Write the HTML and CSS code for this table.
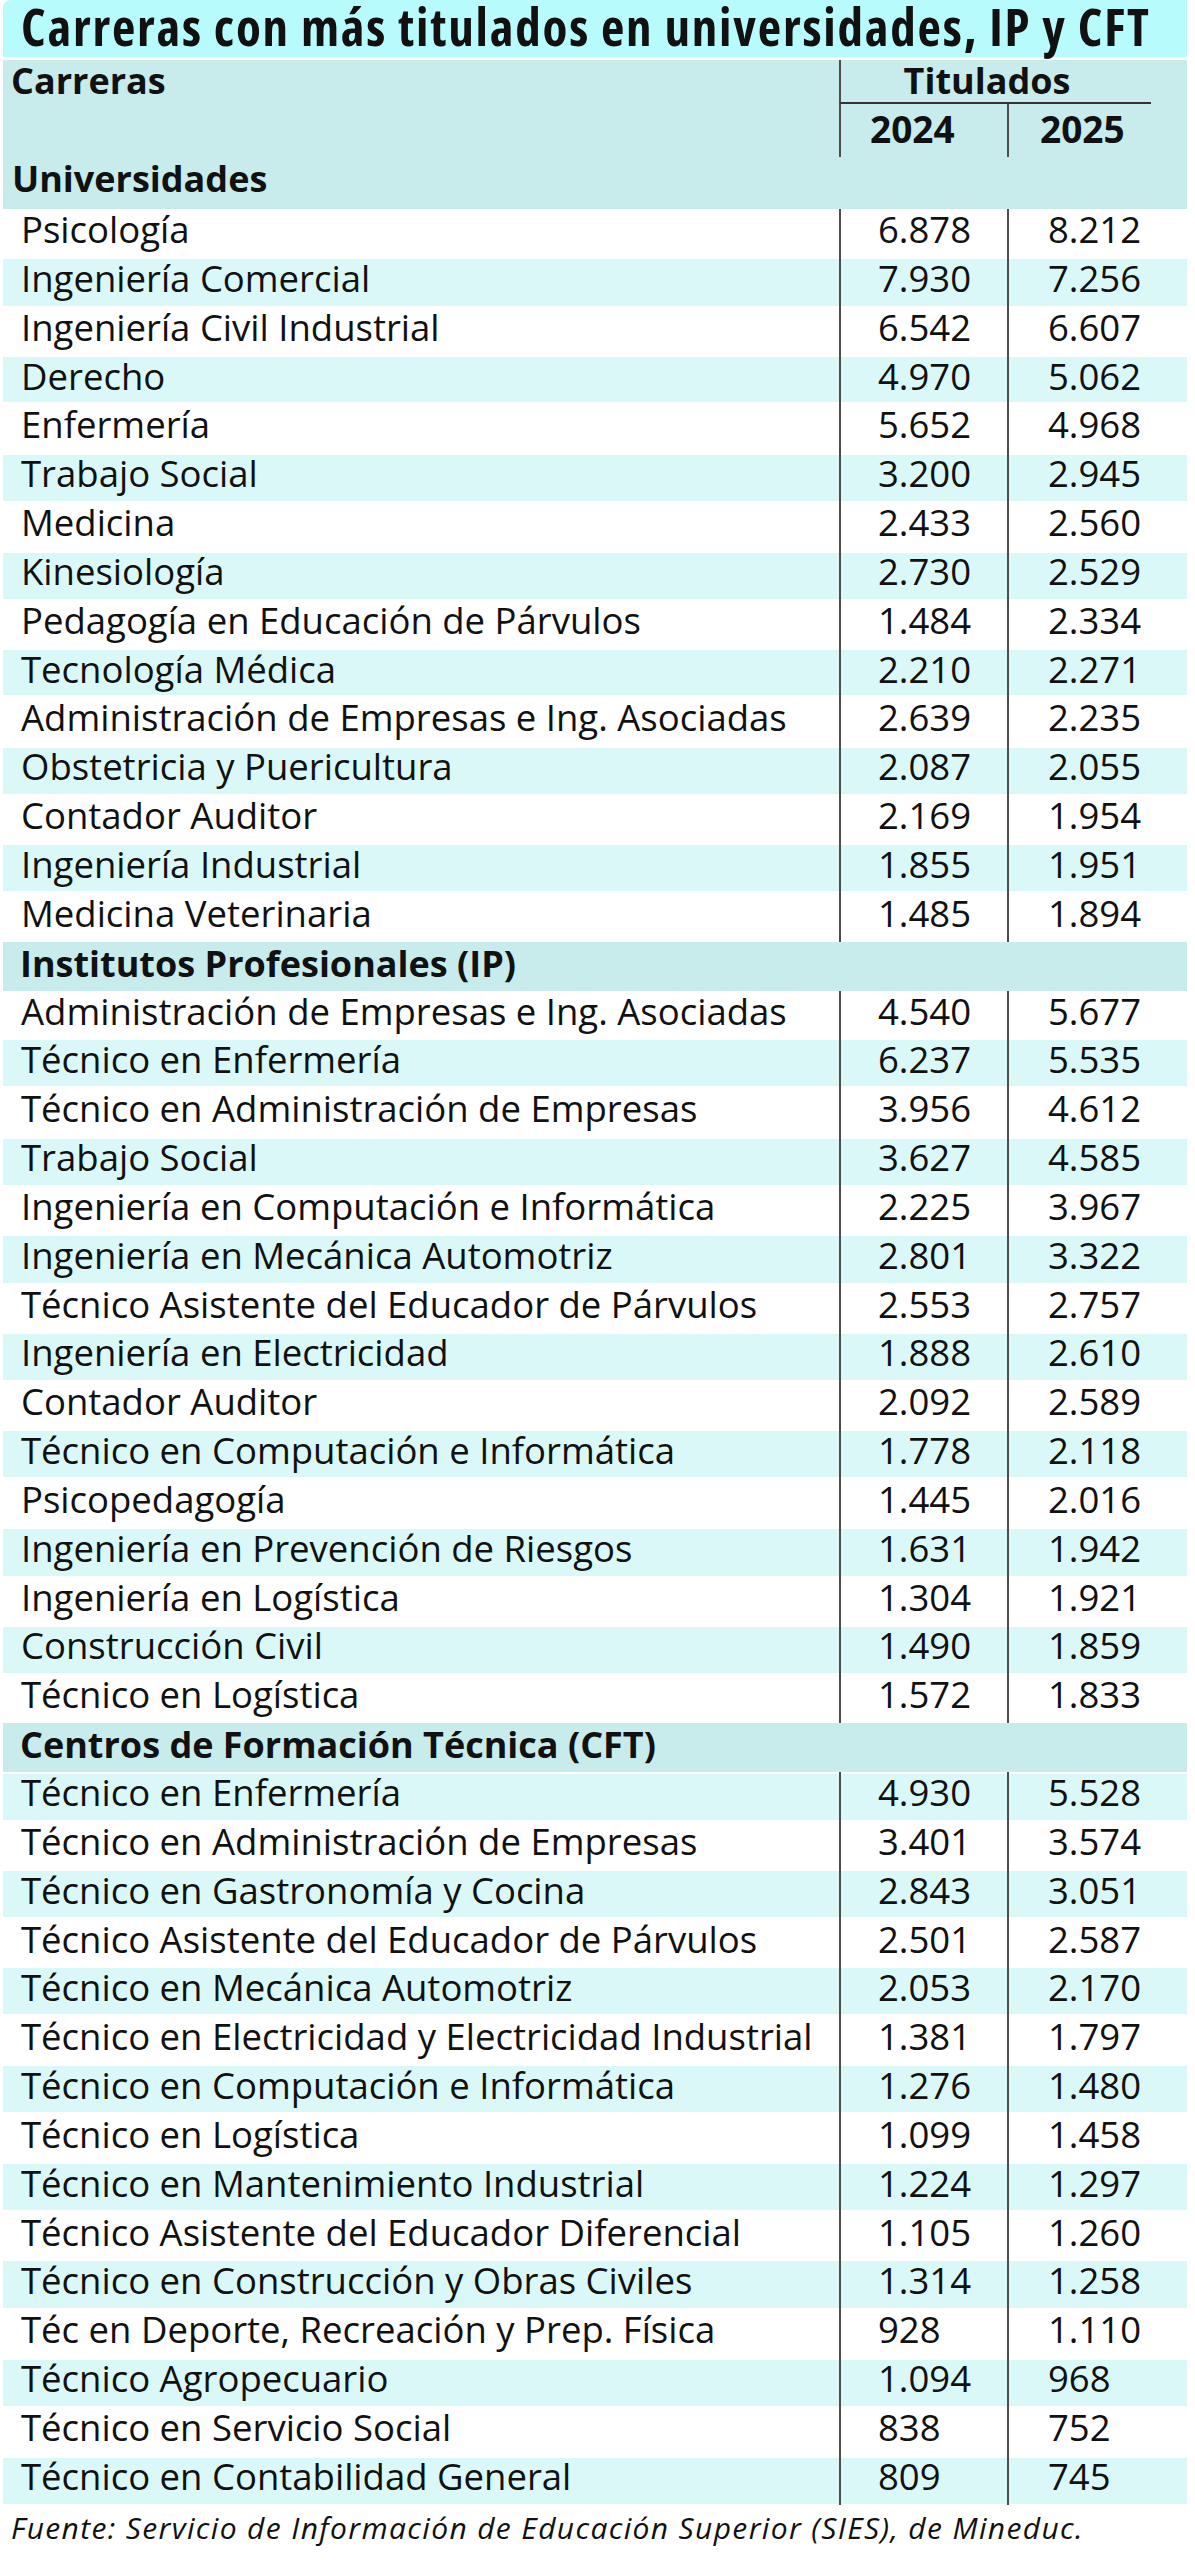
FILE: index.html
```html
<!DOCTYPE html>
<html lang="es">
<head>
<meta charset="utf-8">
<title>Carreras con más titulados</title>
<link rel="stylesheet" href="styles.css">
</head>
<body>
<div class="sheet">
  <div class="title">Carreras con más titulados en universidades, IP y CFT</div>
  <div class="head">
    <div class="carreras">Carreras</div>
    <div class="tit"><span>Titulados</span></div>
    <div class="yr y1">2024</div>
    <div class="yr y2">2025</div>
  </div>
  <div class="sec first">Universidades</div>
  <div class="row"><div class="name">Psicología</div><div class="num">6.878</div><div class="num n2">8.212</div></div>
  <div class="row alt"><div class="name">Ingeniería Comercial</div><div class="num">7.930</div><div class="num n2">7.256</div></div>
  <div class="row"><div class="name">Ingeniería Civil Industrial</div><div class="num">6.542</div><div class="num n2">6.607</div></div>
  <div class="row alt"><div class="name">Derecho</div><div class="num">4.970</div><div class="num n2">5.062</div></div>
  <div class="row"><div class="name">Enfermería</div><div class="num">5.652</div><div class="num n2">4.968</div></div>
  <div class="row alt"><div class="name">Trabajo Social</div><div class="num">3.200</div><div class="num n2">2.945</div></div>
  <div class="row"><div class="name">Medicina</div><div class="num">2.433</div><div class="num n2">2.560</div></div>
  <div class="row alt"><div class="name">Kinesiología</div><div class="num">2.730</div><div class="num n2">2.529</div></div>
  <div class="row"><div class="name">Pedagogía en Educación de Párvulos</div><div class="num">1.484</div><div class="num n2">2.334</div></div>
  <div class="row alt"><div class="name">Tecnología Médica</div><div class="num">2.210</div><div class="num n2">2.271</div></div>
  <div class="row"><div class="name">Administración de Empresas e Ing. Asociadas</div><div class="num">2.639</div><div class="num n2">2.235</div></div>
  <div class="row alt"><div class="name">Obstetricia y Puericultura</div><div class="num">2.087</div><div class="num n2">2.055</div></div>
  <div class="row"><div class="name">Contador Auditor</div><div class="num">2.169</div><div class="num n2">1.954</div></div>
  <div class="row alt"><div class="name">Ingeniería Industrial</div><div class="num">1.855</div><div class="num n2">1.951</div></div>
  <div class="row"><div class="name">Medicina Veterinaria</div><div class="num">1.485</div><div class="num n2">1.894</div></div>

  <div class="sec">Institutos Profesionales (IP)</div>
  <div class="row"><div class="name">Administración de Empresas e Ing. Asociadas</div><div class="num">4.540</div><div class="num n2">5.677</div></div>
  <div class="row alt"><div class="name">Técnico en Enfermería</div><div class="num">6.237</div><div class="num n2">5.535</div></div>
  <div class="row"><div class="name">Técnico en Administración de Empresas</div><div class="num">3.956</div><div class="num n2">4.612</div></div>
  <div class="row alt"><div class="name">Trabajo Social</div><div class="num">3.627</div><div class="num n2">4.585</div></div>
  <div class="row"><div class="name">Ingeniería en Computación e Informática</div><div class="num">2.225</div><div class="num n2">3.967</div></div>
  <div class="row alt"><div class="name">Ingeniería en Mecánica Automotriz</div><div class="num">2.801</div><div class="num n2">3.322</div></div>
  <div class="row"><div class="name">Técnico Asistente del Educador de Párvulos</div><div class="num">2.553</div><div class="num n2">2.757</div></div>
  <div class="row alt"><div class="name">Ingeniería en Electricidad</div><div class="num">1.888</div><div class="num n2">2.610</div></div>
  <div class="row"><div class="name">Contador Auditor</div><div class="num">2.092</div><div class="num n2">2.589</div></div>
  <div class="row alt"><div class="name">Técnico en Computación e Informática</div><div class="num">1.778</div><div class="num n2">2.118</div></div>
  <div class="row"><div class="name">Psicopedagogía</div><div class="num">1.445</div><div class="num n2">2.016</div></div>
  <div class="row alt"><div class="name">Ingeniería en Prevención de Riesgos</div><div class="num">1.631</div><div class="num n2">1.942</div></div>
  <div class="row"><div class="name">Ingeniería en Logística</div><div class="num">1.304</div><div class="num n2">1.921</div></div>
  <div class="row alt"><div class="name">Construcción Civil</div><div class="num">1.490</div><div class="num n2">1.859</div></div>
  <div class="row"><div class="name">Técnico en Logística</div><div class="num">1.572</div><div class="num n2">1.833</div></div>

  <div class="sec">Centros de Formación Técnica (CFT)</div>
  <div class="row alt"><div class="name">Técnico en Enfermería</div><div class="num">4.930</div><div class="num n2">5.528</div></div>
  <div class="row"><div class="name">Técnico en Administración de Empresas</div><div class="num">3.401</div><div class="num n2">3.574</div></div>
  <div class="row alt"><div class="name">Técnico en Gastronomía y Cocina</div><div class="num">2.843</div><div class="num n2">3.051</div></div>
  <div class="row"><div class="name">Técnico Asistente del Educador de Párvulos</div><div class="num">2.501</div><div class="num n2">2.587</div></div>
  <div class="row alt"><div class="name">Técnico en Mecánica Automotriz</div><div class="num">2.053</div><div class="num n2">2.170</div></div>
  <div class="row"><div class="name">Técnico en Electricidad y Electricidad Industrial</div><div class="num">1.381</div><div class="num n2">1.797</div></div>
  <div class="row alt"><div class="name">Técnico en Computación e Informática</div><div class="num">1.276</div><div class="num n2">1.480</div></div>
  <div class="row"><div class="name">Técnico en Logística</div><div class="num">1.099</div><div class="num n2">1.458</div></div>
  <div class="row alt"><div class="name">Técnico en Mantenimiento Industrial</div><div class="num">1.224</div><div class="num n2">1.297</div></div>
  <div class="row"><div class="name">Técnico Asistente del Educador Diferencial</div><div class="num">1.105</div><div class="num n2">1.260</div></div>
  <div class="row alt"><div class="name">Técnico en Construcción y Obras Civiles</div><div class="num">1.314</div><div class="num n2">1.258</div></div>
  <div class="row"><div class="name">Téc en Deporte, Recreación y Prep. Física</div><div class="num">928</div><div class="num n2">1.110</div></div>
  <div class="row alt"><div class="name">Técnico Agropecuario</div><div class="num">1.094</div><div class="num n2">968</div></div>
  <div class="row"><div class="name">Técnico en Servicio Social</div><div class="num">838</div><div class="num n2">752</div></div>
  <div class="row alt"><div class="name">Técnico en Contabilidad General</div><div class="num">809</div><div class="num n2">745</div></div>

  <div class="src">Fuente: Servicio de Información de Educación Superior (SIES), de Mineduc.</div>
</div>
</body>
</html>
```

FILE: styles.css
```css
html, body {
  margin: 0;
  padding: 0;
  background: #ffffff;
}

body {
  font-family: "Open Sans", "Noto Sans", sans-serif;
  color: #111111;
}

.sheet {
  width: 1184px;
  margin-left: 3px;
}

.title {
  height: 57px;
  box-sizing: border-box;
  background: #b8fbfc;
  border-top-left-radius: 8px;
  padding-left: 18px;
  font-size: 51px;
  font-weight: 700;
  font-stretch: 75%;
  letter-spacing: 1.8px;
  line-height: 52px;
  white-space: nowrap;
}

.head {
  margin-top: 3px;
  display: grid;
  grid-template-columns: 836px 168px 180px;
  grid-template-rows: 44px 53px;
  background: #c8ebeb;
  font-weight: 700;
  font-size: 36px;
}

.carreras {
  grid-row: 1 / 3;
  grid-column: 1;
  padding-left: 8px;
  line-height: 42px;
}

.tit {
  grid-row: 1;
  grid-column: 2 / 4;
  margin-right: 36px;
  border-left: 2px solid #4d4d4d;
  border-bottom: 2px solid #333333;
  box-sizing: border-box;
  line-height: 42px;
  text-align: center;
  padding-right: 18px;
}

.yr {
  grid-row: 2;
  border-left: 2px solid #4d4d4d;
  line-height: 50px;
  font-size: 37px;
}

.y1 {
  grid-column: 2;
  padding-left: 29px;
}

.y2 {
  grid-column: 3;
  padding-left: 31px;
}

.sec {
  height: 48.85px;
  box-sizing: border-box;
  background: #c8ebeb;
  font-weight: 700;
  font-size: 36px;
  line-height: 44px;
  padding-left: 17px;
  white-space: nowrap;
}

.sec.first {
  height: 52px;
  padding-left: 9px;
}

.row {
  display: grid;
  grid-template-columns: 836px 168px 180px;
  height: 48.85px;
  font-size: 36.5px;
  line-height: 40px;
}

.row.alt {
  background: linear-gradient(to bottom,
    #ffffff 0, #ffffff 1.5px,
    #dbf8f9 1.5px, #dbf8f9 calc(100% - 1.5px),
    #ffffff calc(100% - 1.5px), #ffffff 100%);
}

.name {
  padding-left: 18px;
  white-space: nowrap;
}

.num {
  border-left: 2px solid #4d4d4d;
  padding-left: 37px;
  white-space: nowrap;
}

.num.n2 {
  padding-left: 39px;
}

.src {
  margin-top: 5px;
  padding-left: 8px;
  font-style: italic;
  font-size: 30px;
  letter-spacing: 1.35px;
  line-height: 36px;
  white-space: nowrap;
}
```
